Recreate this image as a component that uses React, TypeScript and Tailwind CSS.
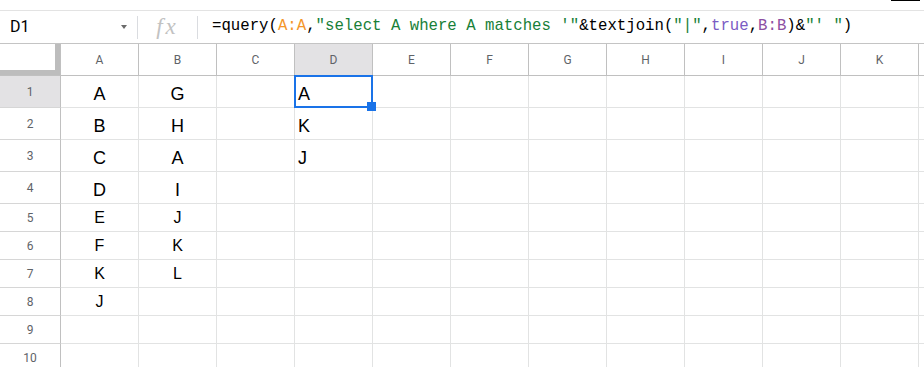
import React from 'react';

// Column letters shown in the header (L is only partly visible, no label)
const COLUMNS = ['A', 'B', 'C', 'D', 'E', 'F', 'G', 'H', 'I', 'J', 'K', 'L'];

// Cell values by column
const DATA: Record<string, string[]> = {
  A: ['A', 'B', 'C', 'D', 'E', 'F', 'K', 'J'],
  B: ['G', 'H', 'A', 'I', 'J', 'K', 'L'],
  D: ['A', 'K', 'J'],
};

const ROWS = [1, 2, 3, 4, 5, 6, 7, 8, 9, 10];

const FormulaText: React.FC = () => (
  <div className="pl-[14px] whitespace-pre font-['Liberation_Mono',monospace] text-[15.7px] text-black">
    <span>=query(</span>
    <span className="text-[#f4962a]">A:A</span>
    <span>,</span>
    <span className="text-[#188038]">"select A where A matches '"</span>
    <span>&amp;textjoin(</span>
    <span className="text-[#188038]">"|"</span>
    <span>,</span>
    <span className="text-[#7b5cc4]">true</span>
    <span>,</span>
    <span className="text-[#8c4fa3]">B:B</span>
    <span>)&amp;</span>
    <span className="text-[#188038]">"' "</span>
    <span>)</span>
  </div>
);

const Cell: React.FC<{ col: string; row: number }> = ({ col, row }) => {
  const value = DATA[col]?.[row - 1] ?? '';
  const tall = row <= 4;
  const selected = col === 'D' && row === 1;

  if (col === 'D') {
    return (
      <div className="relative flex items-end border-r border-b border-[#e2e3e3] pl-[3px] pb-[4px]">
        <span className="text-[18px] leading-none text-black">{value}</span>
        {selected && (
          <div className="absolute -left-[1px] -top-[1px] -right-[1px] -bottom-[1px] z-10 border-2 border-[#1a73e8]">
            <div className="absolute -right-[5px] -bottom-[5px] w-[9px] h-[9px] bg-[#1a73e8]" />
          </div>
        )}
      </div>
    );
  }

  return (
    <div
      className={
        tall
          ? 'flex items-end justify-center border-r border-b border-[#e2e3e3] pb-[4px]'
          : 'flex items-end justify-center border-r border-b border-[#e2e3e3] pb-[5px]'
      }
    >
      <span className={tall ? 'text-[18px] leading-none text-black' : 'text-[16px] leading-none text-black'}>
        {value}
      </span>
    </div>
  );
};

const App: React.FC = () => {
  return (
    <div className="w-[924px] h-[367px] overflow-hidden bg-white font-['Liberation_Sans',Arial,sans-serif]">
      {/* bottom edge of the toolbar above */}
      <div className="h-[11px] flex justify-end border-b border-[#e3e3e3]">
        <div className="w-[29px] h-[1px] mr-[4px] bg-black" />
      </div>

      {/* formula bar */}
      <div className="h-[33px] flex items-center border-b border-[#c4c4c4]">
        <div className="w-[137px] flex items-center justify-between pl-[10px] pr-[10px]">
          <span className="font-['Roboto',sans-serif] text-[16px] text-black">D1</span>
          <span className="w-0 h-0 border-l-[3.5px] border-r-[3.5px] border-t-[4px] border-l-transparent border-r-transparent border-t-[#6b6b6b]" />
        </div>
        <div className="w-px h-[23px] bg-[#dadce0]" />
        <div className="w-[59px] flex items-center justify-center">
          <span className="font-['Liberation_Serif',serif] italic text-[23px] leading-none tracking-[3px] text-[#c2c2c2] -mt-[2px]">
            fx
          </span>
        </div>
        <div className="w-px h-[23px] bg-[#dadce0]" />
        <FormulaText />
      </div>

      {/* sheet grid */}
      <div className="grid grid-cols-[61px_repeat(12,78px)] font-['Roboto',sans-serif]">
        {/* corner with frozen pane handles */}
        <div className="h-[32px] border-r border-b border-[#c0c0c0]">
          <div className="h-full border-r-[5px] border-b-[5px] border-[#bdbdbd]" />
        </div>
        {COLUMNS.map((c) => (
          <div
            key={c}
            className={
              c === 'D'
                ? 'h-[32px] flex items-center justify-center border-r border-b border-[#c0c0c0] bg-[#e3e2e4] text-[12px] text-[#5f6368]'
                : 'h-[32px] flex items-center justify-center border-r border-b border-[#c0c0c0] text-[12px] text-[#5f6368]'
            }
          >
            {c === 'L' ? '' : c}
          </div>
        ))}

        {ROWS.map((r) => (
          <React.Fragment key={r}>
            <div
              className={
                r === 1
                  ? 'h-[32px] flex items-center justify-center border-r border-b border-r-[#c0c0c0] border-b-[#d6d6d6] bg-[#e3e2e4] text-[12px] text-[#5f6368]'
                  : r <= 4
                  ? 'h-[32px] flex items-center justify-center border-r border-b border-r-[#c0c0c0] border-b-[#d6d6d6] text-[12px] text-[#5f6368]'
                  : 'h-[28px] flex items-center justify-center border-r border-b border-r-[#c0c0c0] border-b-[#d6d6d6] text-[12px] text-[#5f6368]'
              }
            >
              {r}
            </div>
            {COLUMNS.map((c) => (
              <div key={c} className="contents font-['Liberation_Sans',Arial,sans-serif]">
                <Cell col={c} row={r} />
              </div>
            ))}
          </React.Fragment>
        ))}
      </div>
    </div>
  );
};

export default App;
